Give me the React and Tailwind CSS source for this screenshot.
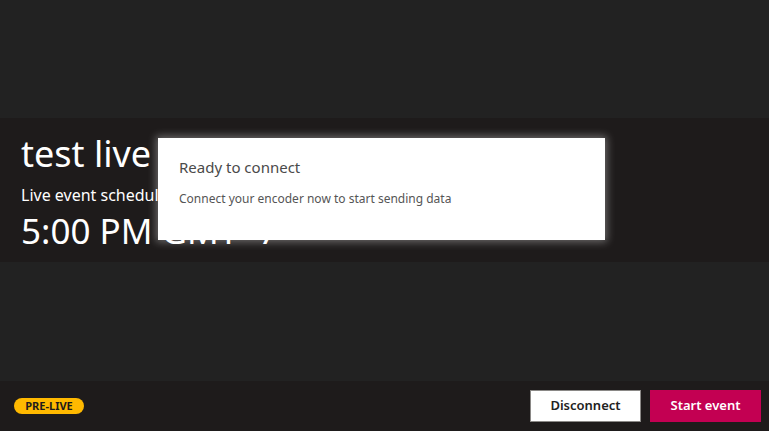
export default function App() {
  return (
    <div className="relative w-[769px] h-[431px] bg-[#222222] overflow-hidden flex flex-col" style={{ fontFamily: '"Segoe UI", "Noto Sans", sans-serif' }}>
      <div className="h-[118px]" />
      <div className="h-[144px] bg-[#1e1b1b] px-[21px] pt-[16px] text-white">
        <h1 className="text-[36px] leading-[40px]">test live stream</h1>
        <p className="text-[16px] leading-[20px] mt-[11px]">Live event scheduled for</p>
        <p className="text-[35px] leading-[40px] mt-[6px]">5:00 PM GMT+7</p>
      </div>
      <div className="flex-1" />
      <div className="h-[50px] bg-[#1e1b1b] flex items-center justify-between pl-[14px] pr-[8px]">
        <span className="bg-[#ffb900] text-[#1e1b1b] text-[11px] font-bold rounded-full h-[16px] w-[70px] flex items-center justify-center">PRE-LIVE</span>
        <div className="flex gap-[9px]">
          <button className="w-[111px] h-[32px] bg-white border border-[#8a8886] text-[#222] text-[13px] font-semibold">Disconnect</button>
          <button className="w-[111px] h-[32px] bg-[#c30052] text-white text-[13px] font-semibold">Start event</button>
        </div>
      </div>

      <div className="absolute left-[158px] top-[138px] w-[447px] h-[102px] bg-white shadow-[0_0_8px_2px_rgba(255,255,255,0.35)] px-[21px] pt-[19px]">
        <h2 className="text-[15px] leading-[20px] text-[#4a4a4a]">Ready to connect</h2>
        <p className="text-[12px] leading-[16px] text-[#555] mt-[14px]">Connect your encoder now to start sending data</p>
      </div>
    </div>
  );
}
